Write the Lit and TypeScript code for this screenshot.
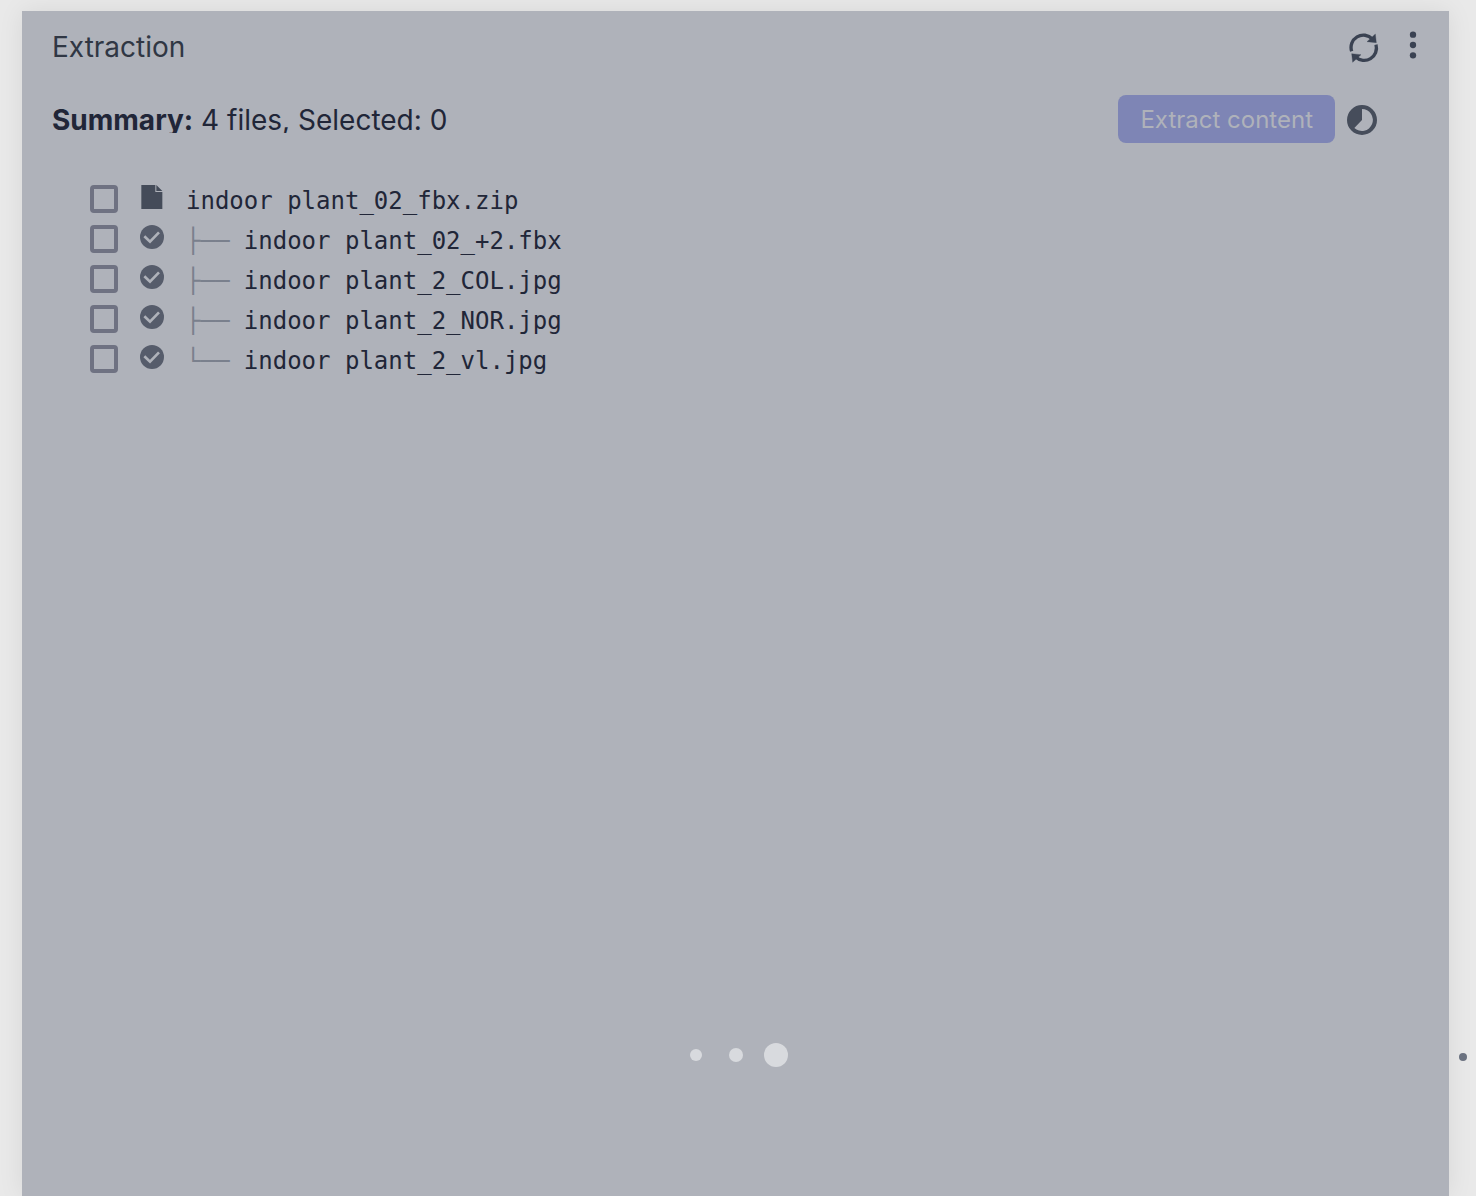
import { LitElement, html, svg, css } from "lit";
import { customElement, property, state } from "lit/decorators.js";

interface FileEntry {
  name: string;
  branch: string;
}

const files: FileEntry[] = [
  { name: "indoor plant_02_fbx.zip", branch: "" },
  { name: "indoor plant_02_+2.fbx", branch: "├──" },
  { name: "indoor plant_2_COL.jpg", branch: "├──" },
  { name: "indoor plant_2_NOR.jpg", branch: "├──" },
  { name: "indoor plant_2_vl.jpg", branch: "└──" },
];

const shapes = {
  refresh: svg`
    <g fill="none" stroke="currentColor" stroke-width="10">
      <path d="M8 55A37 37 0 0 1 70 18" />
      <path d="M81 35A37 37 0 0 1 20 72" />
    </g>
    <path d="M79 3L82 29L54 26Z M8 62L36 65L11 88Z"
      fill="currentColor" stroke="currentColor" stroke-width="1" />`,
  more: svg`
    <g fill="currentColor">
      <circle cx="45" cy="14" r="9.5" />
      <circle cx="45" cy="45" r="9.5" />
      <circle cx="45" cy="76" r="9.5" />
    </g>`,
  progress: svg`
    <path fill="currentColor" fill-rule="evenodd"
      d="M45 0A45 45 0 1 1 45 90A45 45 0 1 1 45 0Z M45 12V45L22 69A33 33 0 1 0 45 12Z" />`,
  file: svg`
    <path fill="currentColor" d="M4 0H46V21H67V72H4Z M49 0L67 18H49Z" />`,
  done: svg`
    <circle cx="36" cy="36" r="36" fill="currentColor" />
    <path d="M13 34L30 50L57 22" fill="none" class="tick" stroke-width="8" />`,
};

@customElement("app-icon")
class AppIcon extends LitElement {
  @property() name: keyof typeof shapes = "file";
  @property({ type: Number }) box = 90;

  static styles = css`
    :host { display: block; flex: none; }
    svg { display: block; width: 100%; height: 100%; }
    .tick { stroke: #afb2ba; }
  `;

  render() {
    return html`<svg viewBox="0 0 ${this.box} ${this.box}" aria-hidden="true">${shapes[this.name]}</svg>`;
  }
}

@customElement("app-root")
class AppRoot extends LitElement {
  @state() selected = new Set<string>();

  static styles = css`
    :host {
      display: flex;
      position: relative;
      box-sizing: border-box;
      min-height: 100vh;
      padding: 11px 27px 0 22px;
      overflow: hidden;
      background: #e9e9e9;
      font-family: Inter, "Liberation Sans", sans-serif;
      font-size: 28px;
      color: #212638;
    }
    .panel {
      position: relative;
      flex: 1;
      min-width: 0;
      background: #afb2ba;
      box-shadow: 0 0 24px rgba(0, 0, 0, 0.08);
    }
    .header {
      display: flex;
      justify-content: space-between;
      align-items: center;
      height: 72px;
      padding: 0 21px 0 30px;
    }
    h1 {
      margin: 0;
      font-size: 28px;
      font-weight: 400;
      line-height: 40px;
      color: #303744;
    }
    button { font: inherit; border: 0; cursor: pointer; }
    .tools { display: flex; align-items: center; gap: 19px; color: #3a4252; }
    .icon-button {
      padding: 2px 0 0;
      background: none;
      color: inherit;
    }
    .menu { padding: 0 0 4px; }
    .medium { width: 30px; height: 30px; }
    .small { width: 24px; height: 24px; }
    .toolbar {
      display: flex;
      align-items: center;
      gap: 12px;
      padding: 12px 72px 0 30px;
      color: #464d5b;
    }
    .summary {
      flex: 1;
      margin: 0;
      height: 28px;
      line-height: 30px;
      overflow: hidden;
      color: #212638;
      white-space: nowrap;
    }
    .extract {
      height: 48px;
      padding: 0 22px;
      border-radius: 8px;
      background: #7e85b5;
      color: #afb2ba;
      font-size: 24px;
      font-weight: 400;
    }
    .toolbar app-icon { padding-top: 2px; }
    .tree {
      list-style: none;
      margin: 0;
      padding: 37px 68px;
      font-family: "DejaVu Sans Mono", monospace;
      font-size: 24px;
      line-height: 42px;
    }
    .row { display: flex; height: 40px; white-space: pre; }
    .row input {
      appearance: none;
      flex: none;
      width: 28px;
      height: 28px;
      margin: 5px 22px 0 0;
      border: 4px solid #6f7282;
      border-radius: 4px;
    }
    .row input:checked { background: #6f7282; }
    .row app-icon { margin: 5px 22px 0 0; color: #565c6b; }
    .row .archive { color: #444b59; }
    .branch { color: #7a808d; }
    .loader {
      position: absolute;
      inset: auto 0 121px;
      display: flex;
      justify-content: center;
    }
    .slot {
      display: flex;
      align-items: center;
      justify-content: center;
      width: 40px;
      height: 40px;
    }
    .dot { border-radius: 50%; background: #d8dade; width: 12px; height: 12px; }
    .dot.mid { width: 14px; height: 14px; }
    .dot.big { width: 24px; height: 24px; }
    .marker {
      position: absolute;
      right: 9px;
      bottom: 135px;
      width: 8px;
      height: 8px;
      border-radius: 50%;
      background: #6b7280;
    }
  `;

  toggle(name: string) {
    const next = new Set(this.selected);
    if (!next.delete(name)) next.add(name);
    this.selected = next;
  }

  renderRow(file: FileEntry, index: number) {
    const archive = !file.branch;
    return html`<li class="row"><input
        type="checkbox"
        id="file-${index}"
        .checked=${this.selected.has(file.name)}
        @change=${() => this.toggle(file.name)}
      /><app-icon
        class="small ${archive ? "archive" : ""}"
        name=${archive ? "file" : "done"}
        box="72"
      ></app-icon><label for="file-${index}">${archive
        ? file.name
        : html`<span class="branch">${file.branch}</span> ${file.name}`}</label></li>`;
  }

  render() {
    return html`
      <main class="panel">
        <header class="header">
          <h1>Extraction</h1>
          <div class="tools">
            <button class="icon-button" aria-label="Refresh">
              <app-icon class="medium" name="refresh"></app-icon>
            </button>
            <button class="icon-button menu" aria-label="More options">
              <app-icon class="medium" name="more"></app-icon>
            </button>
          </div>
        </header>
        <section class="toolbar">
          <p class="summary"><strong>Summary:</strong> ${files.length - 1} files, Selected: ${this.selected.size}</p>
          <button class="extract">Extract content</button>
          <app-icon class="medium" name="progress"></app-icon>
        </section>
        <ul class="tree">
          ${files.map((file, index) => this.renderRow(file, index))}
        </ul>
        <div class="loader" role="status" aria-label="Loading">
          <span class="slot"><span class="dot"></span></span>
          <span class="slot"><span class="dot mid"></span></span>
          <span class="slot"><span class="dot big"></span></span>
        </div>
      </main>
      <span class="marker"></span>
    `;
  }
}
